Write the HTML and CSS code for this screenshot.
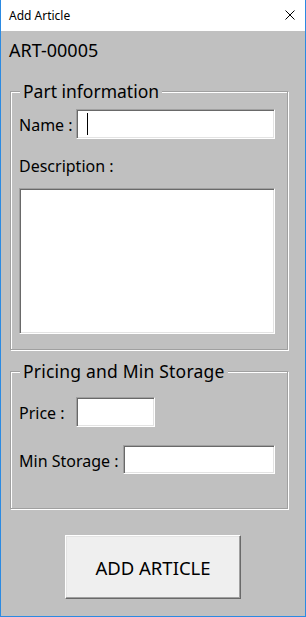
FILE: index.html
```html
<!DOCTYPE html>
<html>
<head>
<meta charset="utf-8">
<title>Add Article</title>
<link rel="stylesheet" href="styles.css">
</head>
<body>
<div class="window">
  <div class="titlebar">
    <span class="title">Add Article</span>
    <svg class="close" width="10" height="10" viewBox="0 0 10 10"><path d="M0.5 0.5 L9.5 9.5 M9.5 0.5 L0.5 9.5" stroke="#000" stroke-width="1" fill="none"/></svg>
  </div>
  <div class="content">
    <div class="code">ART-00005</div>
    <section class="group group-part">
      <div class="legend">Part information</div>
      <div class="row row-name">
        <label class="label label-short">Name :</label>
        <div class="field field-name"><span class="caret"></span></div>
      </div>
      <div class="label label-desc">Description :</div>
      <div class="field field-desc"></div>
    </section>
    <section class="group group-price">
      <div class="legend legend-wide">Pricing and Min Storage</div>
      <div class="row row-price">
        <label class="label label-short">Price :</label>
        <div class="field field-price"></div>
      </div>
      <div class="row row-min">
        <label class="label label-long">Min Storage :</label>
        <div class="field field-min"></div>
      </div>
    </section>
    <button class="add-btn">ADD ARTICLE</button>
  </div>
</div>
</body>
</html>
```
FILE: styles.css
```css
* { box-sizing: border-box; }
html, body { margin: 0; padding: 0; background: #c0c0c0; }
body { font-family: "Noto Sans", "Open Sans", sans-serif; color: #000; }

.window {
  width: 306px;
  height: 617px;
  border: 1px solid #2b8ae2;
  border-top: none;
  background: #c0c0c0;
  display: flex;
  flex-direction: column;
}

.titlebar {
  height: 31px;
  flex-shrink: 0;
  background: #fff;
  display: flex;
  align-items: center;
  justify-content: space-between;
  padding-left: 8px;
  padding-right: 10px;
}
.title { font-size: 12px; line-height: 31px; }
.close { display: block; margin-top: -1px; }

.content {
  flex: 1;
  padding-top: 7px;
  display: flex;
  flex-direction: column;
}

.code {
  font-size: 18px;
  line-height: 24px;
  padding-left: 8px;
}

.group {
  margin-left: 9px;
  width: 278px;
  border: 1px solid #a0a0a0;
  box-shadow: inset 1px 1px 0 #fff, 1px 1px 0 #fff;
  padding: 0 0 0 8px;
  display: flex;
  flex-direction: column;
  align-items: flex-start;
}
.group-part { margin-top: 29px; padding-bottom: 15px; }
.group-price { margin-top: 21px; padding-bottom: 34px; }

.legend {
  margin: -12px 0 0 1px;
  padding: 0 3px;
  background: #c0c0c0;
  font-size: 17.5px;
  line-height: 22px;
  white-space: nowrap;
}
.legend-wide { letter-spacing: 0.2px; }

.row { display: flex; align-items: flex-start; }
.row-name { margin-top: 7px; }
.row-price { margin-top: 15px; }
.row-min { margin-top: 18px; }

.label {
  font-size: 16px;
  line-height: 20px;
  white-space: nowrap;
}
.row .label { margin-top: 6px; flex-shrink: 0; }
.label-short { width: 57px; }
.label-long { width: 104px; }
.label-desc { margin-top: 17px; }

.field {
  background: #fff;
  border: 1px solid;
  border-color: #a0a0a0 #fff #fff #a0a0a0;
  box-shadow: inset 1px 1px 0 #696969, inset -1px -1px 0 #e3e3e3;
  height: 30px;
}
.field-name { width: 199px; padding: 3px 0 0 10px; }
.field-desc { width: 256px; height: 146px; margin-top: 12px; }
.field-price { width: 79px; }
.field-min { width: 152px; height: 29px; }

.caret {
  display: block;
  width: 1px;
  height: 22px;
  background: #000;
}

.add-btn {
  margin: 26px auto 0;
  width: 176px;
  height: 64px;
  background: #efefef;
  border: 1px solid;
  border-color: #fff #696969 #696969 #fff;
  box-shadow: inset -1px -1px 0 #a0a0a0, inset 1px 1px 0 #e3e3e3;
  font-family: "Noto Sans", "Open Sans", sans-serif;
  font-size: 18.5px;
  color: #000;
  padding: 0;
}
```
